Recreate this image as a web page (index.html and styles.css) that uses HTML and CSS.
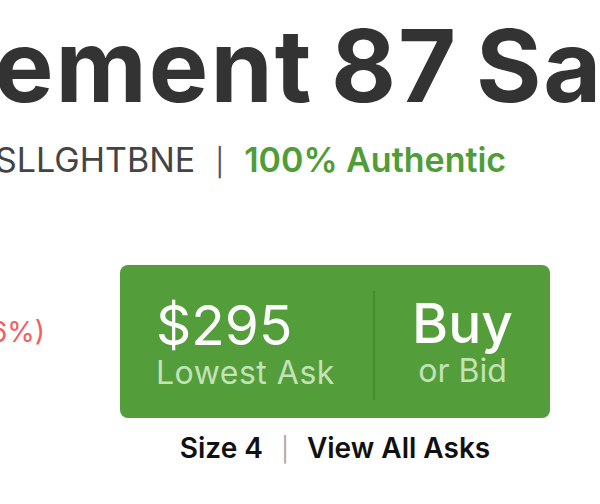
FILE: index.html
```html
<!DOCTYPE html>
<html lang="en">
<head>
    <meta charset="UTF-8">
    <meta name="viewport" content="width=device-width, initial-scale=1.0">
    <title>Cement 87</title>
    <link rel="stylesheet" href="styles.css">
</head>
<body>

    <div class="product-header">
        <h1 class="product-title">ement 87 Sa</h1>
        <div class="product-meta">
            <span class="sku">SLLGHTBNE</span>
            <span class="meta-sep">|</span>
            <span class="authentic">100% Authentic</span>
        </div>
    </div>

    <div class="market-row">
        <div class="last-sale">
            <span class="change">6%)</span>
        </div>

        <div class="ask-column">
            <a class="buy-button" href="#">
                <div class="ask-price">
                    <span class="price">$295</span>
                    <span class="label">Lowest Ask</span>
                </div>
                <div class="buy-bid">
                    <span class="buy">Buy</span>
                    <span class="label">or Bid</span>
                </div>
            </a>
            <div class="size-line">
                <span>Size 4</span>
                <span class="size-sep">|</span>
                <span>View All Asks</span>
            </div>
        </div>
    </div>

</body>
</html>
```

FILE: styles.css
```css
body {
    font-family: Inter, Lato, Arial, sans-serif;
    background-color: #fff;
    margin: 0;
    padding: 0;
    width: 600px;
    height: 504px;
    overflow: hidden;
}

.product-header {
    padding-top: 16px;
}

.product-title {
    margin: 0 0 0 -6px;
    font-size: 100px;
    font-weight: 700;
    line-height: 99px;
    letter-spacing: 2px;
    word-spacing: -8px;
    color: #333;
    white-space: nowrap;
}

.product-meta {
    display: flex;
    align-items: baseline;
    gap: 20px;
    margin-top: 25px;
    margin-left: -5px;
    font-size: 34px;
    line-height: 40px;
    white-space: nowrap;
}

.sku {
    color: #444;
}

.meta-sep {
    color: #555;
    font-size: 27px;
}

.authentic {
    color: #4f9d37;
    font-weight: 600;
}

.market-row {
    display: flex;
    align-items: flex-start;
    margin-top: 82px;
}

.last-sale {
    width: 120px;
    padding-top: 50px;
}

.change {
    display: block;
    margin-left: -10px;
    color: #f65b5e;
    font-size: 28px;
}

.ask-column {
    display: flex;
    flex-direction: column;
    align-items: center;
    width: 430px;
}

.buy-button {
    display: flex;
    width: 100%;
    height: 153px;
    background-color: #539d3a;
    border-radius: 8px;
    text-decoration: none;
    color: #fff;
}

.ask-price {
    display: flex;
    flex-direction: column;
    width: 253px;
    padding: 30px 0 0 36px;
    box-sizing: border-box;
}

.buy-bid {
    flex: 1;
    display: flex;
    flex-direction: column;
    align-items: center;
    border-left: 2px solid #438e2d;
    margin: 26px 0 18px;
    padding-top: 2px;
}

.price, .buy {
    font-size: 55px;
    line-height: 60px;
}

.buy {
    font-weight: 500;
}

.label {
    font-size: 32px;
    line-height: 36px;
    color: #c3e2b8;
}

.ask-price .label {
    letter-spacing: 0.5px;
}

.size-line {
    display: flex;
    align-items: baseline;
    gap: 18px;
    margin-top: 12px;
    font-size: 28px;
    line-height: 36px;
    font-weight: 600;
    color: #111;
}

.size-sep {
    color: #aaa;
    font-weight: 400;
    font-size: 24px;
}
```
